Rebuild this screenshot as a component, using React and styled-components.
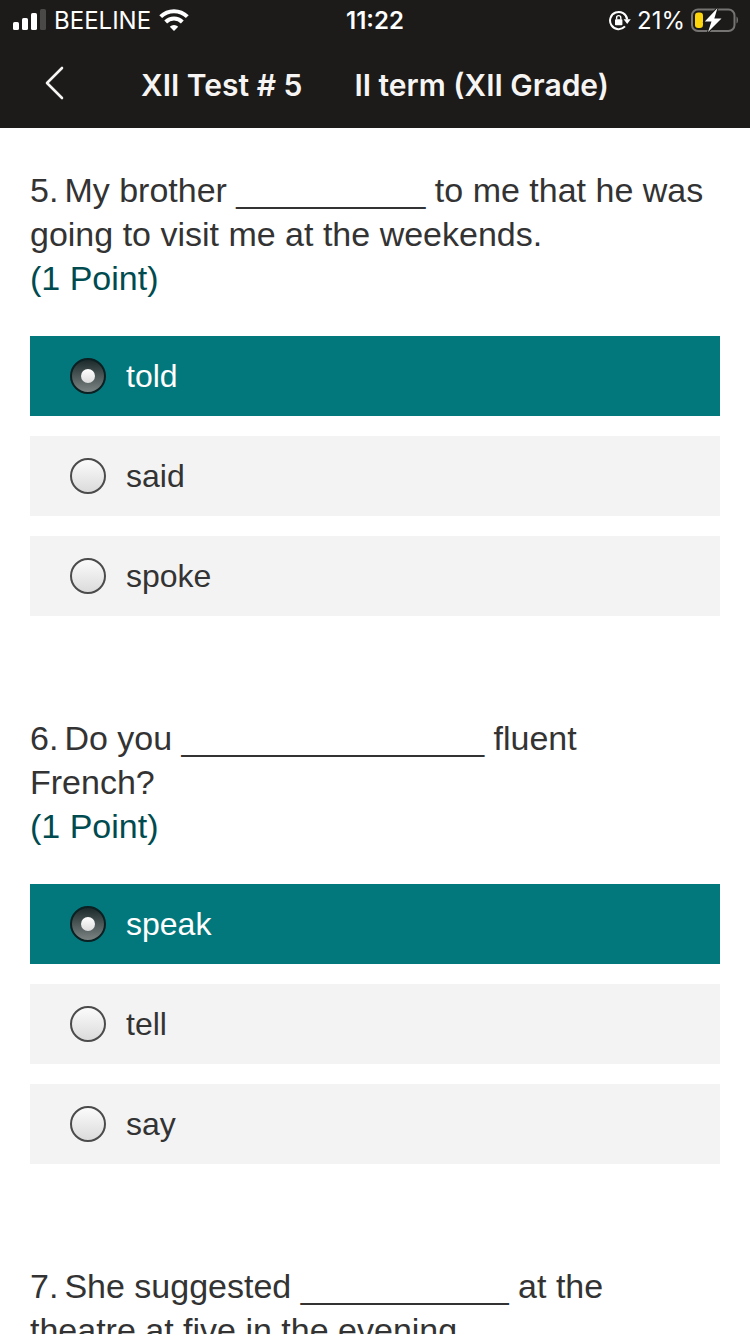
import React, { useState } from "react";
import styled, { createGlobalStyle } from "styled-components";

const GlobalStyle = createGlobalStyle`
  *, *::before, *::after { box-sizing: border-box; }
  body { margin: 0; background: #ffffff; }
`;

const Screen = styled.div`
  display: flex;
  flex-direction: column;
  height: 100vh;
  overflow: hidden;
  background: #ffffff;
  color: #333333;
  font-family: "Liberation Sans", Arial, sans-serif;
`;

const Header = styled.header`
  flex: none;
  background: #1c1b1a;
  color: #f7f5f3;
  font-family: Inter, "Liberation Sans", sans-serif;
`;

const StatusBar = styled.div`
  display: grid;
  grid-template-columns: 1fr auto 1fr;
  align-items: center;
  height: 42px;
  padding: 0 12px;
  color: #ffffff;
  font-size: 24px;
  line-height: 42px;
`;

const StatusGroup = styled.div`
  display: flex;
  align-items: center;
  justify-content: ${({ $end }) => ($end ? "flex-end" : "flex-start")};
  gap: ${({ $end }) => ($end ? "6px" : "8px")};

  svg { flex: none; }
`;

const Clock = styled.time`
  font-weight: 600;
`;

const NavBar = styled.div`
  display: grid;
  grid-template-columns: 1fr auto 1fr;
  align-items: center;
  height: 86px;
`;

const BackButton = styled.button`
  display: flex;
  align-items: center;
  justify-content: center;
  justify-self: start;
  width: 48px;
  height: 48px;
  margin-left: 30px;
  padding: 0;
  border: 0;
  background: none;
  color: inherit;
`;

const Title = styled.h1`
  display: flex;
  gap: 52px;
  margin: 0;
  font-size: 30px;
  font-weight: 600;
  line-height: 40px;
  white-space: nowrap;
`;

const Form = styled.form`
  flex: 1;
  min-height: 0;
  overflow: hidden;
  display: flex;
  flex-direction: column;
  gap: 100px;
  padding: 40px 30px;
`;

const Question = styled.fieldset`
  flex: none;
  min-width: 0;
  margin: 0;
  padding: 0;
  border: 0;
`;

const Prompt = styled.legend`
  width: 100%;
  margin-bottom: 36px;
  padding: 0 14px 0 0;
  font-size: 34px;
  line-height: 44px;
`;

const Ordinal = styled.span`
  margin-right: 6px;
`;

const Points = styled.span`
  display: block;
  color: #004b50;
`;

const Options = styled.div`
  display: flex;
  flex-direction: column;
  gap: 20px;
`;

const Option = styled.label`
  display: flex;
  align-items: center;
  gap: 20px;
  height: 80px;
  padding: 0 40px;
  background: ${({ $selected }) => ($selected ? "#03787c" : "#f3f3f3")};
  color: ${({ $selected }) => ($selected ? "#ffffff" : "#333333")};
  font-size: 32px;
  line-height: 38px;
`;

const Radio = styled.input`
  appearance: none;
  display: grid;
  place-items: center;
  flex: none;
  width: 36px;
  height: 36px;
  margin: 0;
  border: 2px solid #4b4b4b;
  border-radius: 50%;
  background: linear-gradient(#fdfdfd, #d9d9d9) border-box;

  &:checked {
    border-color: #0b2022;
    background: linear-gradient(#1c2a2b, #7c8483);
  }

  &:checked::after {
    content: "";
    width: 14px;
    height: 14px;
    border-radius: 50%;
    background: linear-gradient(#ffffff, #dcdcdc);
  }
`;

const SignalIcon = () => (
  <svg width="34" height="24" viewBox="0 0 34 24" fill="#fff" aria-hidden="true">
    <rect x="1" y="13" width="6" height="8" rx="1.6" />
    <rect x="10" y="9" width="6" height="12" rx="1.6" />
    <rect x="19" y="4" width="6" height="17" rx="1.6" />
    <rect x="28" y="0" width="6" height="21" rx="1.6" fill="#4a4948" />
  </svg>
);

const WifiIcon = () => (
  <svg width="30" height="24" viewBox="0 0 30 24" aria-hidden="true">
    <path d="M1.7 7.7a18.8 18.8 0 0 1 26.6 0" fill="none" stroke="#fff" strokeWidth="4" />
    <path d="M6.7 13a11.8 11.8 0 0 1 16.6 0" fill="none" stroke="#fff" strokeWidth="4" />
    <path d="M15 22l-4.2-4.2a6 6 0 0 1 8.4 0z" fill="#fff" />
  </svg>
);

const RotationLockIcon = () => (
  <svg width="22" height="22" viewBox="0 0 22 22" aria-hidden="true">
    <path d="M16 16.4A8.6 8.6 0 1 1 18.2 9.5" fill="none" stroke="#fff" strokeWidth="2" />
    <path d="M14.6 9.2h7.2l-3.6 4.8z" fill="#fff" />
    <rect x="6" y="9.2" width="7.4" height="6" rx="0.8" fill="#fff" />
    <path d="M7.6 9.5V7.7a2.1 2.1 0 0 1 4.2 0V9.5" fill="none" stroke="#fff" strokeWidth="1.4" />
  </svg>
);

const BatteryIcon = () => (
  <svg width="47" height="26" viewBox="0 0 47 26" aria-hidden="true">
    <rect x="1" y="1.5" width="42.5" height="21.5" rx="6" fill="none" stroke="#757473" strokeWidth="2" />
    <path d="M45.5 8.5c2 1 2 6 0 7z" fill="#757473" />
    <rect x="4" y="4.5" width="8" height="15.5" rx="3.2" fill="#fdd50c" />
    <path
      d="M26.5 0L13.8 13.5h6.7L17 24 30.5 10.5h-7.2z"
      fill="#fff"
      stroke="#1c1b1a"
      strokeWidth="2"
      paintOrder="stroke"
    />
  </svg>
);

const BackIcon = () => (
  <svg width="20" height="38" viewBox="0 0 20 38" aria-hidden="true">
    <path
      d="M18 2L3 17l15 15"
      fill="none"
      stroke="currentColor"
      strokeWidth="2.6"
      strokeLinecap="round"
      strokeLinejoin="round"
    />
  </svg>
);

const QUESTIONS = [
  {
    number: 5,
    before: "My brother",
    blank: 10,
    after: "to me that he was going to visit me at the weekends.",
    options: ["told", "said", "spoke"],
    answer: "told",
  },
  {
    number: 6,
    before: "Do you",
    blank: 16,
    after: "fluent French?",
    options: ["speak", "tell", "say"],
    answer: "speak",
  },
  {
    number: 7,
    before: "She suggested",
    blank: 11,
    after: "at the theatre at five in the evening.",
    options: [],
    answer: "",
  },
];

function QuestionBlock({ number, before, blank, after, options, answer }) {
  const [value, setValue] = useState(answer);
  return (
    <Question>
      <Prompt>
        <Ordinal>{number}.</Ordinal>
        {`${before} ${"_".repeat(blank)} ${after}`}
        <Points>(1 Point)</Points>
      </Prompt>
      <Options>
        {options.map((option) => (
          <Option key={option} $selected={option === value}>
            <Radio
              type="radio"
              name={`question-${number}`}
              value={option}
              checked={option === value}
              onChange={() => setValue(option)}
            />
            {option}
          </Option>
        ))}
      </Options>
    </Question>
  );
}

export default function App() {
  return (
    <Screen>
      <GlobalStyle />
      <Header>
        <StatusBar>
          <StatusGroup>
            <SignalIcon />
            <span>BEELINE</span>
            <WifiIcon />
          </StatusGroup>
          <Clock>11:22</Clock>
          <StatusGroup $end>
            <RotationLockIcon />
            <span>21%</span>
            <BatteryIcon />
          </StatusGroup>
        </StatusBar>
        <NavBar>
          <BackButton type="button" aria-label="Back">
            <BackIcon />
          </BackButton>
          <Title>
            <span>XII Test # 5</span>
            <span>II term (XII Grade)</span>
          </Title>
        </NavBar>
      </Header>
      <Form>
        {QUESTIONS.map((question) => (
          <QuestionBlock key={question.number} {...question} />
        ))}
      </Form>
    </Screen>
  );
}
